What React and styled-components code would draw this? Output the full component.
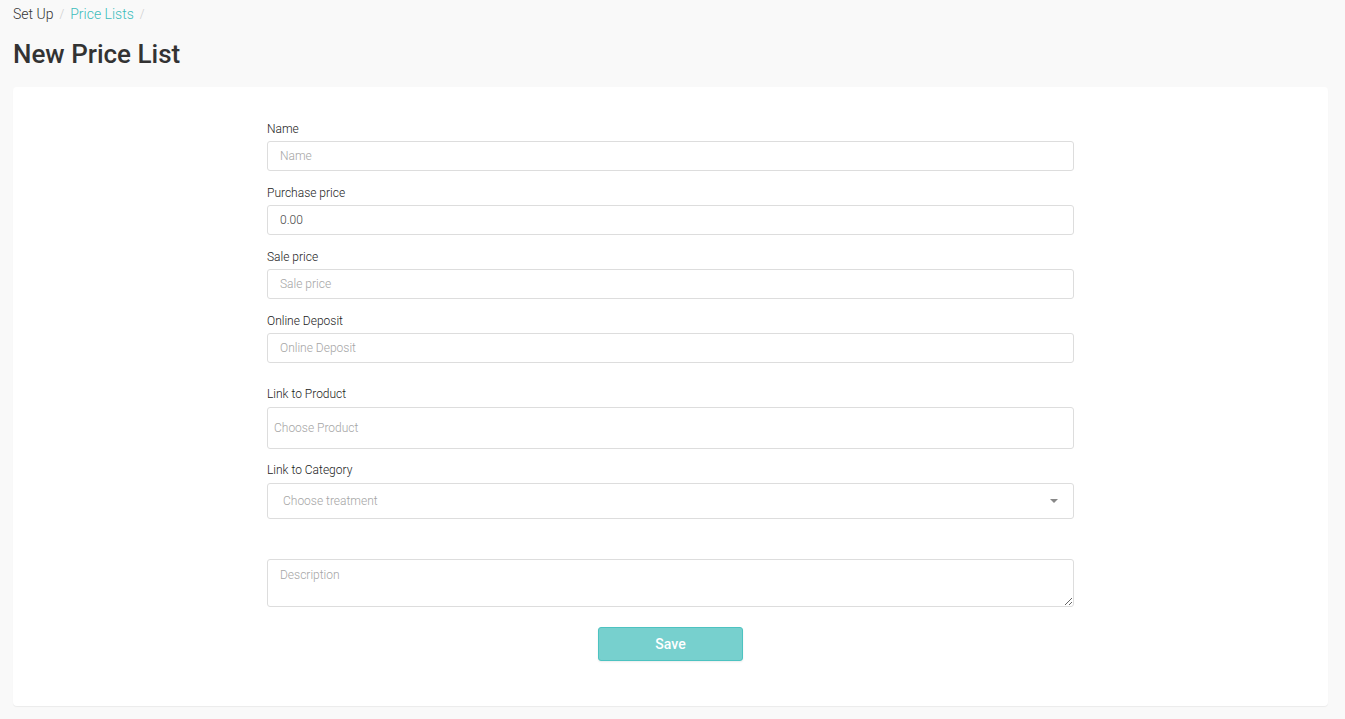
import styled, { createGlobalStyle } from "styled-components";

const GlobalStyle = createGlobalStyle`
  html, body {
    margin: 0;
    padding: 0;
    background: #f9f9f9;
    font-family: Roboto, "Liberation Sans", Arial, sans-serif;
    color: #333;
  }
  * { box-sizing: border-box; }
`;

const Page = styled.div`
  padding: 5px 17px 13px 13px;
  min-height: 719px;
`;

const Crumbs = styled.div`
  display: flex;
  align-items: center;
  gap: 6px;
  font-size: 14px;
  font-weight: 300;
  line-height: 18px;
  color: #444;
`;

const Crumb = styled.span`
  color: ${(p) => (p.link ? "#3dbdbc" : "#333")};
`;

const Sep = styled.span`
  color: #ccc;
  font-size: 12px;
`;

const Title = styled.h1`
  margin: 16px 0 18px 0;
  font-size: 26px;
  line-height: 30px;
  font-weight: 500;
  color: #333;
`;

const Card = styled.div`
  background: #fff;
  border-radius: 4px;
  box-shadow: 0 1px 1px rgba(0, 0, 0, 0.06);
  padding: 33px 0 45px 0;
`;

const Form = styled.form`
  width: 807px;
  margin: 0 auto;
  display: flex;
  flex-direction: column;
`;

const Group = styled.div`
  display: flex;
  flex-direction: column;
  gap: ${(p) => (p.loose ? 4 : 3)}px;
  margin-bottom: ${(p) => p.gap ?? 13}px;
`;

const Label = styled.label`
  font-size: 12px;
  font-weight: 300;
  line-height: 18px;
  color: #222;
`;

const Input = styled.input`
  height: ${(p) => p.h ?? 30}px;
  border: 1px solid #ddd;
  border-radius: 3px;
  padding: 0 ${(p) => p.pad ?? 12}px;
  font-family: inherit;
  font-size: 12px;
  font-weight: 300;
  color: #444;
  outline: none;
  background: #fff;
  &::placeholder {
    color: #a5a5a5;
  }
`;

const Select = styled.div`
  position: relative;
  height: 36px;
  border: 1px solid #ddd;
  border-radius: 3px;
  padding: 0 15px;
  display: flex;
  align-items: center;
  font-size: 12px;
  font-weight: 300;
  color: #a5a5a5;
  background: #fff;
`;

const Caret = styled.span`
  position: absolute;
  right: 15px;
  top: 15px;
  width: 0;
  height: 0;
  border-left: 4px solid transparent;
  border-right: 4px solid transparent;
  border-top: 4px solid #888;
`;

const TextArea = styled.textarea`
  height: 48px;
  border: 1px solid #ddd;
  border-radius: 3px;
  padding: 8px 12px;
  font-family: inherit;
  font-size: 12px;
  font-weight: 300;
  color: #444;
  resize: vertical;
  outline: none;
  &::placeholder {
    color: #a5a5a5;
  }
`;

const Actions = styled.div`
  display: flex;
  justify-content: center;
  margin-top: 20px;
`;

const SaveButton = styled.button`
  width: 145px;
  height: 34px;
  background: #77d0ce;
  border: 1px solid #4dc3c1;
  border-radius: 3px;
  color: #fff;
  font-family: inherit;
  font-size: 14px;
  font-weight: 500;
  box-shadow: 0 1px 2px rgba(0, 0, 0, 0.08);
  cursor: pointer;
`;

export default function App() {
  return (
    <>
      <GlobalStyle />
      <Page>
        <Crumbs>
          <Crumb>Set Up</Crumb>
          <Sep>/</Sep>
          <Crumb link>Price Lists</Crumb>
          <Sep>/</Sep>
        </Crumbs>
        <Title>New Price List</Title>
        <Card>
          <Form onSubmit={(e) => e.preventDefault()}>
            <Group>
              <Label>Name</Label>
              <Input placeholder="Name" />
            </Group>
            <Group>
              <Label>Purchase price</Label>
              <Input defaultValue="0.00" />
            </Group>
            <Group>
              <Label>Sale price</Label>
              <Input placeholder="Sale price" />
            </Group>
            <Group gap={22}>
              <Label>Online Deposit</Label>
              <Input placeholder="Online Deposit" />
            </Group>
            <Group loose gap={12}>
              <Label>Link to Product</Label>
              <Input h={42} pad={6} placeholder="Choose Product" />
            </Group>
            <Group loose gap={40}>
              <Label>Link to Category</Label>
              <Select>
                Choose treatment
                <Caret />
              </Select>
            </Group>
            <TextArea placeholder="Description" />
            <Actions>
              <SaveButton type="submit">Save</SaveButton>
            </Actions>
          </Form>
        </Card>
      </Page>
    </>
  );
}
